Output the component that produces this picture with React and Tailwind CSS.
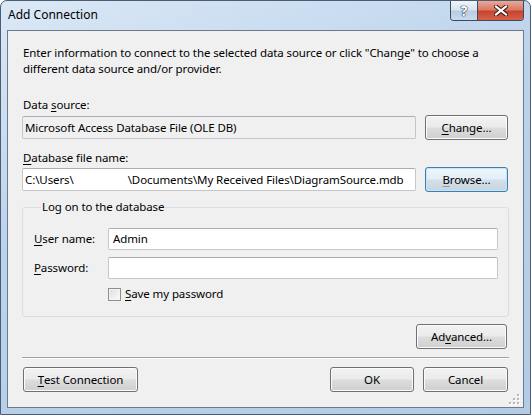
import React from 'react'

const FONT = { fontFamily: '"Noto Sans", "Open Sans", sans-serif' }

const btn =
  'h-[25px] rounded-[3px] border border-[#707070] bg-[linear-gradient(#f2f2f2,#ebebeb_48%,#dddddd_52%,#cfcfcf)] shadow-[inset_0_0_0_1px_#fbfbfb] text-black flex items-center justify-center'

const field =
  'h-[23px] rounded-[2px] border border-[#c3c6cc] border-t-[#abadb3] bg-white text-black flex items-center px-[2px] whitespace-nowrap overflow-hidden'

function U({ children }) {
  return <span className="underline underline-offset-[2px]">{children}</span>
}

function Grip() {
  const dots = [[8, 0], [4, 4], [8, 4], [0, 8], [4, 8], [8, 8]]
  return (
    <svg width="11" height="11" className="ml-auto mr-[3px] mb-[2px] self-end">
      {dots.map(([x, y], i) => (
        <g key={i}>
          <rect x={x + 1} y={y + 1} width="2" height="2" fill="#ffffff" />
          <rect x={x} y={y} width="2" height="2" fill="#b8b8b8" />
        </g>
      ))}
    </svg>
  )
}

export default function App() {
  return (
    <div
      className="w-[531px] h-[415px] rounded-t-[7px] border border-[#4b5d72] bg-[linear-gradient(160deg,#dbe8f6,#bcd3ec_40%,#b3cbe6)] flex flex-col overflow-hidden text-[11.5px] leading-[16px] tracking-[-0.1px]"
      style={FONT}
    >
      {/* title bar */}
      <div className="h-[29px] flex items-start">
        <span className="text-[12px] text-black mt-[6px] ml-[7px] tracking-normal">Add Connection</span>
        <div className="ml-auto mr-[6px] flex h-[20px] rounded-b-[4px] border border-t-0 border-[#3b4a5c] overflow-hidden">
          <div className="w-[27px] h-full flex items-center justify-center bg-[linear-gradient(#eef4fa,#d8e4f1_45%,#b9cde2_55%,#c9dbee)] border-r border-[#3b4a5c]">
            <span
              className="text-[14px] font-bold text-white leading-none"
              style={{ textShadow: '0 0 1px #1f2d3d, 0 0 1px #1f2d3d, 0 0 1px #1f2d3d' }}
            >
              ?
            </span>
          </div>
          <div className="w-[45px] h-full flex items-center justify-center bg-[linear-gradient(#e9a99a,#d97a66_45%,#c7452f_55%,#d8604a)]">
            <svg width="14" height="11" viewBox="0 0 14 11">
              <path d="M2 1.5 L12 9.5 M12 1.5 L2 9.5" stroke="#3a1a14" strokeWidth="4.2" strokeLinecap="square" />
              <path d="M2 1.5 L12 9.5 M12 1.5 L2 9.5" stroke="#ffffff" strokeWidth="2.2" strokeLinecap="square" />
            </svg>
          </div>
        </div>
      </div>

      {/* client area */}
      <div className="mx-[6px] h-[378px] border border-[#6d7a88] bg-[#f0f0f0] flex flex-col pl-[14px] pr-[14px] text-black">
        <p className="mt-[14px] pl-[1px]">
          Enter information to connect to the selected data source or click "Change" to choose a
          <br />
          different data source and/or provider.
        </p>

        <div className="mt-[20px] pl-[1px]">
          Data <U>s</U>ource:
        </div>
        <div className="mt-[2px] flex items-center gap-[9px]">
          <div className={field + ' w-[394px] !bg-[#f0f0f0]'}>Microsoft Access Database File (OLE DB)</div>
          <button className={btn + ' w-[83px]'}>
            <U>C</U>hange...
          </button>
        </div>

        <div className="mt-[10px] pl-[1px]">
          <U>D</U>atabase file name:
        </div>
        <div className="mt-[1px] flex items-center gap-[9px]">
          <div className={field + ' w-[394px]'}>
            C:\Users\<span className="inline-block w-[54px]" />\Documents\My Received Files\DiagramSource.mdb
          </div>
          <button
            className={
              btn +
              ' w-[83px] !border-[#3c7fb1] !shadow-[inset_0_0_0_1px_#c4e5f6] !bg-[linear-gradient(#eef6fb,#e3eef6_48%,#d3e0ea_52%,#c8d5df)]'
            }
          >
            <span className="underline decoration-[#9a9a9a] underline-offset-[2px]">B</span>rowse...
          </button>
        </div>

        <fieldset className="mt-[7px] rounded-[3px] border border-[#d5dfe5] pl-[11px] pr-[10px] pb-[14px]">
          <legend className="ml-[7px] px-[1px]">Log on to the database</legend>
          <div className="mt-[13px] flex items-center">
            <span className="w-[74px]">
              <U>U</U>ser name:
            </span>
            <div className={field + ' flex-1 !h-[22px] !px-[4px]'}>Admin</div>
          </div>
          <div className="mt-[7px] flex items-center">
            <span className="w-[74px]">
              <U>P</U>assword:
            </span>
            <div className={field + ' flex-1 !h-[22px]'} />
          </div>
          <div className="mt-[7px] ml-[74px] flex items-center gap-[4px] h-[16px]">
            <span className="w-[13px] h-[13px] border border-[#8f8f8f] bg-[linear-gradient(135deg,#dcdcdc,#fdfdfd)] shadow-[inset_0_0_0_1px_#f4f4f4]" />
            <span>
              <U>S</U>ave my password
            </span>
          </div>
        </fieldset>

        <div className="mt-[7px] flex justify-end">
          <button className={btn + ' w-[91px] mr-[2px]'}>
            Ad<U>v</U>anced...
          </button>
        </div>

        <div className="mt-[8px] h-[2px] border-t border-[#a0a0a0] border-b border-b-white" />

        <div className="mt-[8px] flex items-center">
          <button className={btn + ' w-[115px] ml-[1px]'}>
            <U>T</U>est Connection
          </button>
          <button className={btn + ' w-[84px] ml-auto'}>OK</button>
          <button className={btn + ' w-[85px] ml-[9px] mr-[1px]'}>Cancel</button>
        </div>
        <div className="flex-1 flex -mr-[14px]">
          <Grip />
        </div>
      </div>
    </div>
  )
}
